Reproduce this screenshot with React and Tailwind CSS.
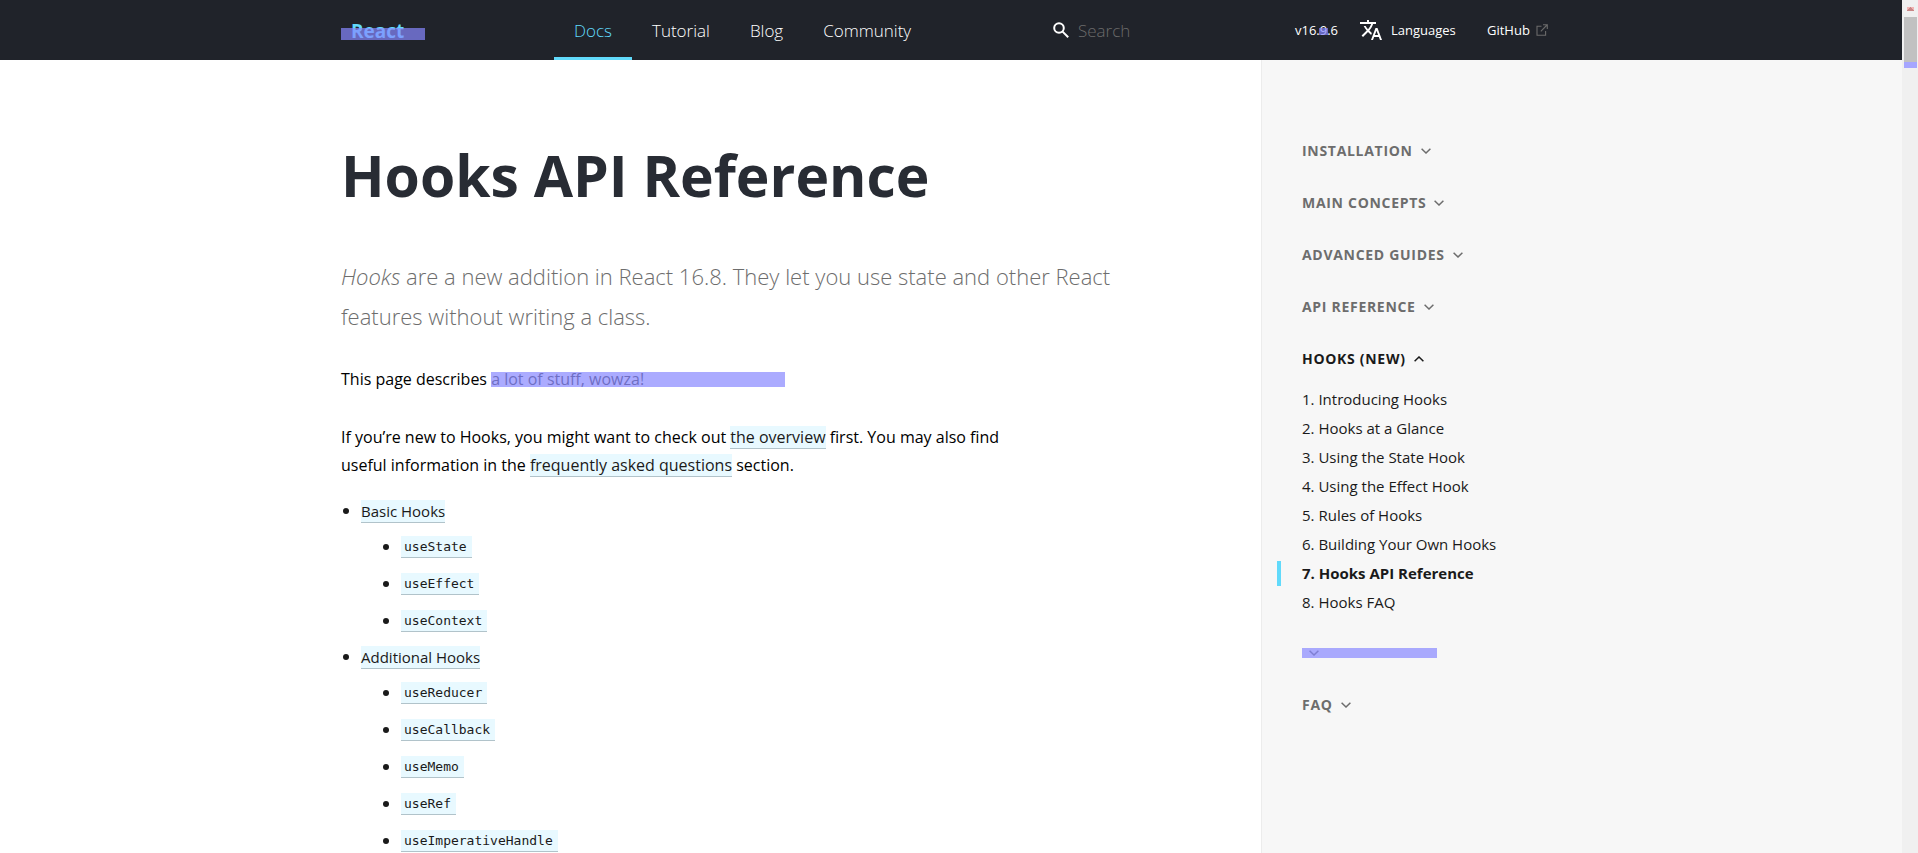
const basicHooks = ['useState', 'useEffect', 'useContext'];
const additionalHooks = ['useReducer', 'useCallback', 'useMemo', 'useRef', 'useImperativeHandle'];
const hookPages = [
  'Introducing Hooks',
  'Hooks at a Glance',
  'Using the State Hook',
  'Using the Effect Hook',
  'Rules of Hooks',
  'Building Your Own Hooks',
  'Hooks API Reference',
  'Hooks FAQ',
];

function Chevron({ up = false }) {
  return (
    <svg viewBox="0 0 10 6" className="h-[6px] w-[10px] shrink-0" fill="none" stroke="currentColor" strokeWidth="1.5" aria-hidden="true">
      <path d={up ? 'M0.6 5.3 5 1l4.4 4.3' : 'M0.6 0.7 5 5l4.4-4.3'} />
    </svg>
  );
}

function DocLink({ children }) {
  return (
    <a href="#doc" className="inline-block h-[23px] border-b border-[#b1c3ca] bg-[#e8f9ff] leading-[23px] text-[#1a1a1a]">
      {children}
    </a>
  );
}

function HookList({ title, items }) {
  return (
    <li className="relative">
      <span className="absolute top-[11px] -left-[18px] size-[6px] rounded-full bg-[#1a1a1a]" aria-hidden="true" />
      <div className="h-7 text-[15px] leading-7">
        <DocLink>{title}</DocLink>
      </div>
      <ul className="ml-10 pt-[7px]">
        {items.map((name) => (
          <li key={name} className="relative h-[37px] pt-1">
            <span className="absolute top-3 -left-[18px] size-[6px] rounded-full bg-[#1a1a1a]" aria-hidden="true" />
            <a
              href="#hook"
              className="block h-[22px] w-fit border-b border-[#b1c3ca] bg-[#e8f9ff] pr-[5px] pl-[3px] font-['DejaVu_Sans_Mono',monospace] text-[13px] leading-[22px] text-[#1a1a1a]"
            >
              {name}
            </a>
          </li>
        ))}
      </ul>
    </li>
  );
}

function Section({ title, open = false }) {
  return (
    <button
      type="button"
      aria-expanded={open}
      className={`flex h-[52px] items-center gap-2 text-sm font-bold tracking-wider uppercase ${open ? 'text-[#1a1a1a]' : 'text-[#6d6d6d]'}`}
    >
      {title}
      <Chevron up={open} />
    </button>
  );
}

function Header() {
  return (
    <header className="h-[60px] shrink-0 bg-[#20232a] text-white">
      <div className="mx-auto flex h-full max-w-[1260px] items-center px-5">
        <div className="w-[213px] shrink-0">
          <a href="#home" className="relative block w-[84px] pt-[2px] pl-[10px] text-[19px] leading-7 font-bold text-[#61dafb]">
            React
            <span className="absolute top-[13px] left-0 h-3 w-full bg-[#8888ff]/70" aria-hidden="true" />
          </a>
        </div>
        <nav className="flex h-full flex-1 text-[17px] font-light">
          <a href="#docs" className="flex items-center border-b-[3px] border-[#61dafb] px-5 pt-[5px] text-[#61dafb]">Docs</a>
          <a href="#tutorial" className="flex items-center px-5 pt-[2px]">Tutorial</a>
          <a href="#blog" className="flex items-center px-5 pt-[2px]">Blog</a>
          <a href="#community" className="flex items-center px-5 pt-[2px]">Community</a>
        </nav>
        <label className="flex w-[242px] items-center gap-[9px]">
          <svg viewBox="0 0 16 16" className="size-4 shrink-0" fill="none" stroke="currentColor" strokeWidth="2" aria-hidden="true">
            <circle cx="6" cy="6" r="4.8" />
            <path d="m9.6 9.6 5.6 5.6" />
          </svg>
          <input
            type="search"
            aria-label="Search docs"
            placeholder="Search"
            className="w-32 bg-transparent pt-[2px] text-[17px] font-light outline-none placeholder:text-[#6b6b6b]"
          />
        </label>
        <div className="flex w-[266px] items-center text-[13px] leading-5">
          <a href="#versions" className="relative w-16">
            v16.9.6
            <span className="absolute top-[8px] left-6 h-[7px] w-[9px] bg-[#8888ff]/70" aria-hidden="true" />
          </a>
          <a href="#languages" className="flex w-32 items-center gap-2">
            <svg viewBox="0 0 24 24" className="size-6 shrink-0" fill="currentColor" aria-hidden="true">
              <path d="M12.87 15.07l-2.54-2.51.03-.03c1.74-1.94 2.98-4.17 3.71-6.53H17V4h-7V2H8v2H1v1.99h11.17C11.5 7.92 10.44 9.75 9 11.35 8.07 10.32 7.3 9.19 6.69 8h-2c.73 1.63 1.73 3.17 2.98 4.56l-5.09 5.02L4 19l5-5 3.11 3.11.76-2.04zM18.5 10h-2L12 22h2l1.12-3h4.75L21 22h2l-4.5-12zm-2.62 7l1.62-4.33L19.12 17h-3.24z" />
            </svg>
            Languages
          </a>
          <a href="#github" className="flex items-center gap-[6px]">
            GitHub
            <svg viewBox="0 0 12 12" className="size-3 shrink-0 text-[#6b6b6b]" fill="none" stroke="currentColor" strokeWidth="1.1" aria-hidden="true">
              <path d="M5.5 2.2H1v9h8.6V7M7 .7h4.3V5M11 1 4.8 7.3" />
            </svg>
          </a>
        </div>
      </div>
    </header>
  );
}

function Article() {
  return (
    <main className="col-start-2 min-w-0 px-5 pt-[81px]">
      <h1 className="text-[57px] leading-[68px] font-bold text-[#282c34]">Hooks API Reference</h1>
      <p className="mt-[47px] text-[22px] leading-10 font-light text-[#6d6d6d]">
        <em>Hooks</em> are a new addition in React 16.8. They let you use state and other React
        <br />
        features without writing a class.
      </p>
      <div className="mt-[29px] max-w-[700px] text-base leading-7 text-black">
        <p className="flex">
          This page describes&nbsp;
          <span className="relative w-[294px] text-[#333333]">
            a lot of stuff, wowza!
            <span className="absolute top-[7px] left-0 h-[15px] w-full bg-[#8888ff]/70" aria-hidden="true" />
          </span>
        </p>
        <p className="mt-[30px]">
          If you’re new to Hooks, you might want to check out <DocLink>the overview</DocLink> first. You may also find
          <br />
          useful information in the <DocLink>frequently asked questions</DocLink> section.
        </p>
      </div>
      <ul className="mt-[18px] pl-5">
        <HookList title="Basic Hooks" items={basicHooks} />
        <HookList title="Additional Hooks" items={additionalHooks} />
      </ul>
    </main>
  );
}

function Sidebar() {
  return (
    <aside className="col-span-2 col-start-3 border-l border-[#ececec] bg-[#f7f7f7] pt-[65px] pl-10">
      <Section title="Installation" />
      <Section title="Main Concepts" />
      <Section title="Advanced Guides" />
      <Section title="API Reference" />
      <Section title="Hooks (New)" open />
      <ul className="text-[15px] text-[#1a1a1a]">
        {hookPages.map((page, i) => (
          <li key={page} className="relative h-[29px] leading-7">
            {i === 6 && <span className="absolute top-[2px] -left-[25px] h-[25px] w-1 bg-[#61dafb]" aria-hidden="true" />}
            <a href="#page" className={i === 6 ? 'font-bold' : ''}>
              {i + 1}. {page}
            </a>
          </li>
        ))}
      </ul>
      <div className="flex h-[46px] items-end">
        <button type="button" aria-label="Expand section" className="relative flex h-[20px] w-[135px] items-center pl-[7px] text-[#6d6d6d]">
          <Chevron />
          <span className="absolute top-[5px] left-0 h-[10px] w-full bg-[#8888ff]/70" aria-hidden="true" />
        </button>
      </div>
      <div className="pt-4">
        <Section title="FAQ" />
      </div>
    </aside>
  );
}

export default function App() {
  return (
    <div className="flex h-screen overflow-hidden bg-white font-['Open_Sans','Noto_Sans',sans-serif]">
      <div className="flex min-w-0 flex-1 flex-col">
        <Header />
        <div className="grid min-h-0 flex-1 grid-cols-[1fr_minmax(0,940px)_minmax(0,320px)_1fr] overflow-hidden">
          <Article />
          <Sidebar />
        </div>
      </div>
      <div className="flex w-4 shrink-0 flex-col bg-[#f0f0f0] pr-[1px] pl-[2px]" aria-hidden="true">
        <div className="flex h-[17px] justify-center pt-[7px]">
          <svg viewBox="0 0 7 4" className="h-1 w-[7px]">
            <path d="M0 0h7v4H0z" fill="#f1b5b5" />
            <path d="M3 0h1v1h1v1h1v1h1v1H0V3h1V2h1V1h1z" fill="#c98686" />
          </svg>
        </div>
        <div className="h-[45px] bg-[#c1c1c1]" />
        <div className="h-[6px] bg-[#a6a6ff]" />
      </div>
    </div>
  );
}
